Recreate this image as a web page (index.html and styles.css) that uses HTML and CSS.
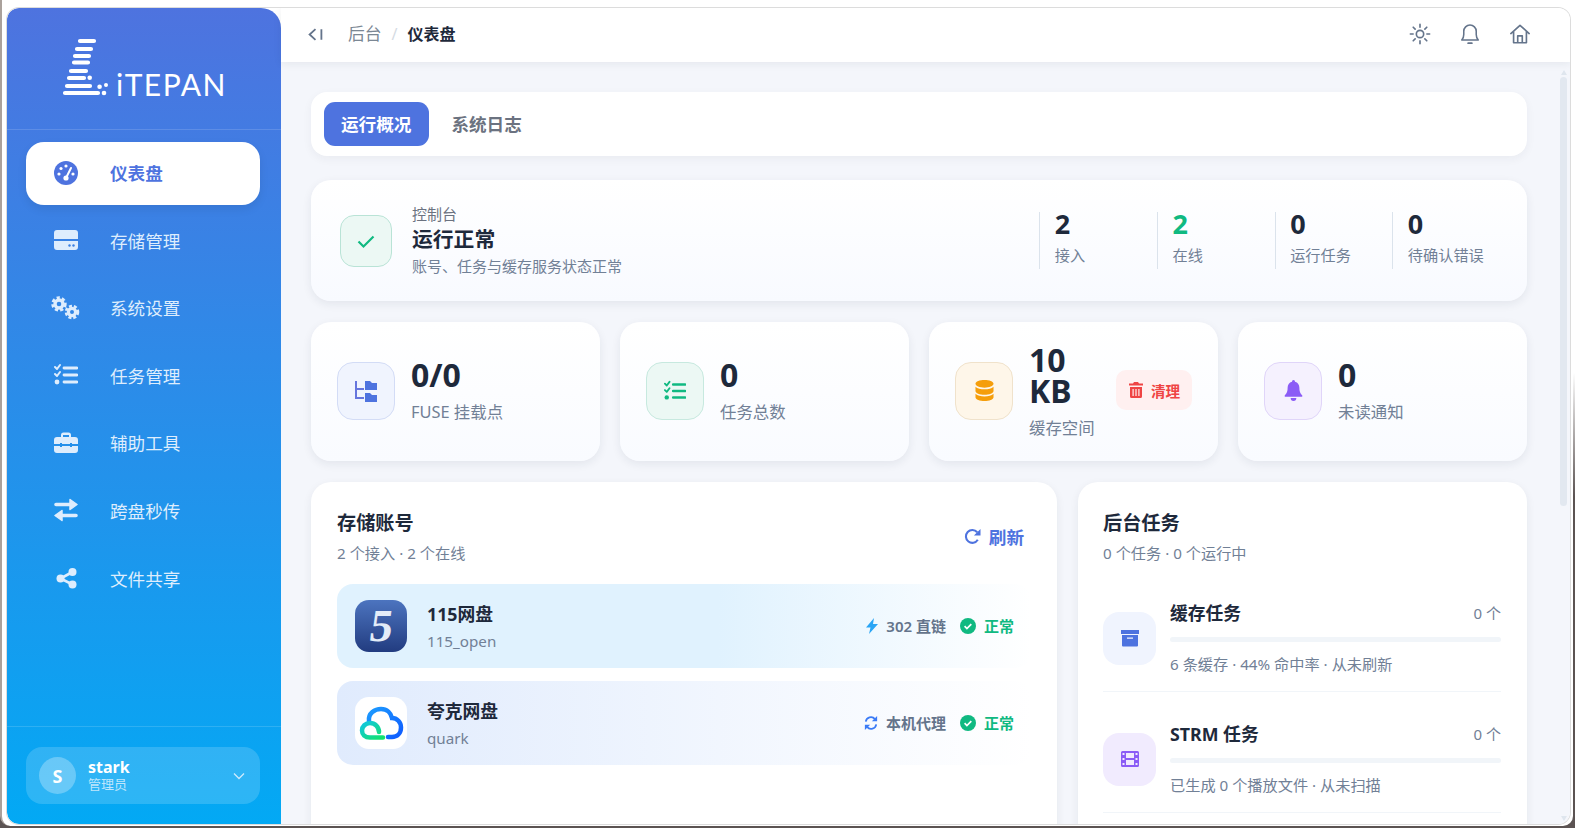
FILE: index.html
```html
<!DOCTYPE html>
<html lang="zh-CN">
<head>
    <meta charset="UTF-8">
    <title>LitePan 仪表盘</title>
    <link rel="stylesheet" href="styles.css">
</head>
<body>
<div class="frame">
<div class="window">

    <aside class="sidebar">
        <div class="brand">
            <svg class="brand-mark" viewBox="0 0 48 60" width="48" height="60">
                <g stroke="#fff" stroke-width="4.200" stroke-linecap="round">
                    <path d="M19 3h14M16 11h14M14 18h14M13 24.500h14M10 33h15M8 40h15M6 48h23M4 55h33"/>
                </g>
                <g fill="#fff">
                    <circle cx="28.700" cy="39.700" r="2.300"/>
                    <circle cx="38.600" cy="48.700" r="2.300"/>
                    <circle cx="45" cy="47" r="2"/>
                    <circle cx="43" cy="55" r="2.300"/>
                </g>
            </svg>
            <span class="brand-text">iTEPAN</span>
        </div>

        <nav class="nav">
            <a class="nav-item active">
                <svg class="nav-icon" viewBox="0 0 24 24"><circle cx="12" cy="12" r="12" fill="currentColor"/><g fill="#fff"><circle cx="5" cy="13" r="1.600"/><circle cx="7" cy="7.500" r="1.600"/><circle cx="12" cy="5" r="1.600"/><circle cx="19" cy="13" r="1.600"/></g><path d="M17 7l-4 8" stroke="#fff" stroke-width="2" stroke-linecap="round"/><circle cx="12" cy="17" r="2.600" fill="#fff"/></svg>
                <span>仪表盘</span>
            </a>
            <a class="nav-item">
                <svg class="nav-icon" viewBox="0 0 24 24"><path fill="currentColor" d="M3 2h18a3 3 0 0 1 3 3v6H0V5a3 3 0 0 1 3-3zM0 13h24v6a3 3 0 0 1-3 3H3a3 3 0 0 1-3-3z"/><circle cx="15.500" cy="17.500" r="1.200" fill="#3a80e2"/><circle cx="19.500" cy="17.500" r="1.200" fill="#3a80e2"/></svg>
                <span>存储管理</span>
            </a>
            <a class="nav-item">
                <svg class="nav-icon gears" viewBox="0 0 30 24"><g fill="none" stroke="currentColor"><circle cx="8" cy="8" r="4" stroke-width="3.400"/><circle cx="8" cy="8" r="6.400" stroke-width="2.600" stroke-dasharray="3.200 2.200"/><circle cx="21" cy="16" r="3.600" stroke-width="3.200"/><circle cx="21" cy="16" r="6" stroke-width="2.600" stroke-dasharray="3 1.900"/></g></svg>
                <span>系统设置</span>
            </a>
            <a class="nav-item">
                <svg class="nav-icon" viewBox="0 0 24 24"><path d="M1 4l2 2 3-4M1 11l2 2 3-4" fill="none" stroke="currentColor" stroke-width="2" stroke-linecap="round" stroke-linejoin="round"/><circle cx="3" cy="19" r="2.400" fill="currentColor"/><path d="M10 5h13M10 12h13M10 19h13" stroke="currentColor" stroke-width="2.800" stroke-linecap="round"/></svg>
                <span>任务管理</span>
            </a>
            <a class="nav-item">
                <svg class="nav-icon" viewBox="0 0 24 24"><path fill="currentColor" d="M7 6V4a2.500 2.500 0 0 1 2.500-2.500h5A2.500 2.500 0 0 1 17 4v2h-2V4h-6v2zM3 6h18a3 3 0 0 1 3 3v4h-6v-1h-2v1H8v-1H6v1H0V9a3 3 0 0 1 3-3zM0 15h6v1h2v-1h8v1h2v-1h6v4a3 3 0 0 1-3 3H3a3 3 0 0 1-3-3z"/></svg>
                <span>辅助工具</span>
            </a>
            <a class="nav-item">
                <svg class="nav-icon" viewBox="0 0 24 24"><path d="M2 6.500h14M22 17.500H8" stroke="currentColor" stroke-width="3.600" stroke-linecap="round"/><path d="M16 1.500L23 6.500 16 11.500zM8 12.500L1 17.500 8 22.500z" fill="currentColor" stroke="currentColor" stroke-width="1.500" stroke-linejoin="round"/></svg>
                <span>跨盘秒传</span>
            </a>
            <a class="nav-item">
                <svg class="nav-icon" viewBox="0 0 24 24"><path d="M18.500 6L6.500 12.500l12 6" fill="none" stroke="currentColor" stroke-width="2.600"/><circle cx="18.500" cy="6" r="4" fill="currentColor"/><circle cx="6.500" cy="12.500" r="4" fill="currentColor"/><circle cx="18.500" cy="18.500" r="4" fill="currentColor"/></svg>
                <span>文件共享</span>
            </a>
        </nav>

        <div class="side-foot">
            <div class="user-card">
                <div class="avatar">S</div>
                <div class="user-info">
                    <div class="user-name">stark</div>
                    <div class="user-role">管理员</div>
                </div>
                <svg class="user-arrow" viewBox="0 0 12 8" width="12" height="8"><path d="M1 1.500l5 5 5-5" fill="none" stroke="currentColor" stroke-width="1.300"/></svg>
            </div>
        </div>
    </aside>

    <div class="main">
        <header class="topbar">
            <svg class="collapse" viewBox="0 0 14 14" width="15" height="15"><path d="M7 2L1.500 7 7 12M12.500 2v10" fill="none" stroke="currentColor" stroke-width="1.700"/></svg>
            <div class="crumbs">
                <span class="crumb">后台</span>
                <span class="crumb-sep">/</span>
                <span class="crumb-now">仪表盘</span>
            </div>
            <div class="top-actions">
                <svg viewBox="0 0 24 24" width="22" height="22"><circle cx="12" cy="12" r="4" fill="none" stroke="currentColor" stroke-width="1.800"/><path d="M12 1.500v3M12 19.500v3M1.500 12h3M19.500 12h3M4.600 4.600l2.100 2.100M17.300 17.300l2.100 2.100M4.600 19.400l2.100-2.100M17.300 6.700l2.100-2.100" stroke="currentColor" stroke-width="1.800" stroke-linecap="round"/></svg>
                <svg viewBox="0 0 24 24" width="22" height="22"><path d="M3 18.500c1.500-1.500 2.200-3 2.200-6V9a6.800 6.800 0 0 1 13.600 0v3.500c0 3 .7 4.500 2.200 6z" fill="none" stroke="currentColor" stroke-width="1.700" stroke-linejoin="round"/><path d="M10 22h4" stroke="currentColor" stroke-width="2" stroke-linecap="round"/></svg>
                <svg viewBox="0 0 24 24" width="22" height="22"><path d="M2 11.500L12 2.500l10 9M5 9v12.500h14V9M9.500 21.500V14h5v7.500" fill="none" stroke="currentColor" stroke-width="1.800" stroke-linejoin="round" stroke-linecap="round"/></svg>
            </div>
        </header>

        <div class="main-body">
            <div class="content">
                <div class="tabs">
                    <div class="tab tab-on">运行概况</div>
                    <div class="tab">系统日志</div>
                </div>

                <section class="hero">
                    <div class="hero-icon">
                        <svg viewBox="0 0 20 20" width="20" height="20"><path d="M2.500 10.500l5 5 10-10" fill="none" stroke="#10b981" stroke-width="2.200"/></svg>
                    </div>
                    <div class="hero-text">
                        <div class="hero-kicker">控制台</div>
                        <div class="hero-title">运行正常</div>
                        <div class="hero-sub">账号、任务与缓存服务状态正常</div>
                    </div>
                    <div class="hero-stats">
                        <div class="hero-stat"><b>2</b><span>接入</span></div>
                        <div class="hero-stat"><b class="green">2</b><span>在线</span></div>
                        <div class="hero-stat"><b>0</b><span>运行任务</span></div>
                        <div class="hero-stat"><b>0</b><span>待确认错误</span></div>
                    </div>
                </section>

                <section class="stats">
                    <div class="stat-card">
                        <div class="stat-icon tone-blue">
                            <svg viewBox="0 0 24 24" width="24" height="24"><path d="M2 2v17h8M2 10h8" fill="none" stroke="#6675dd" stroke-width="2"/><path fill="#4e73df" d="M11 2h5l2 2h5v7H11zM11 14h5l2 2h5v7H11z"/></svg>
                        </div>
                        <div class="stat-text">
                            <div class="stat-value">0/0</div>
                            <div class="stat-label">FUSE 挂载点</div>
                        </div>
                    </div>
                    <div class="stat-card">
                        <div class="stat-icon tone-green">
                            <svg viewBox="0 0 24 24" width="22" height="22"><path d="M1 4l2 2 3-4M1 11l2 2 3-4" fill="none" stroke="#10b981" stroke-width="2" stroke-linecap="round" stroke-linejoin="round"/><circle cx="3" cy="19" r="2.400" fill="#10b981"/><path d="M10 5h13M10 12h13M10 19h13" stroke="#10b981" stroke-width="2.800" stroke-linecap="round"/></svg>
                        </div>
                        <div class="stat-text">
                            <div class="stat-value">0</div>
                            <div class="stat-label">任务总数</div>
                        </div>
                    </div>
                    <div class="stat-card">
                        <div class="stat-icon tone-amber">
                            <svg viewBox="0 0 20 24" width="19" height="23"><path fill="#f59e0b" d="M10 1c5 0 9.500 1.500 9.500 4S15 9 10 9 .5 7.500.5 5 5 1 10 1zM.5 8c2 2 5.500 2.800 9.500 2.800S17.500 10 19.500 8v4.500c0 2.500-4.500 4-9.500 4s-9.500-1.500-9.500-4zM.5 15.500c2 2 5.500 2.800 9.500 2.800s7.500-.8 9.500-2.800V19c0 2.500-4.500 4-9.500 4s-9.500-1.500-9.500-4z"/></svg>
                        </div>
                        <div class="stat-text">
                            <div class="stat-value">10 KB</div>
                            <div class="stat-label">缓存空间</div>
                        </div>
                        <button class="clear-btn">
                            <svg viewBox="0 0 14 16" width="14" height="16"><path fill="#ef4444" d="M5 0h4l1 1.500h4V3.500H0V1.500h4zM1 5h12v9.500a1.500 1.500 0 0 1-1.500 1.500h-9A1.500 1.500 0 0 1 1 14.500zM3.500 7v7h1.200V7zM6.400 7v7h1.200V7zM9.300 7v7h1.200V7z"/></svg>
                            <span>清理</span>
                        </button>
                    </div>
                    <div class="stat-card">
                        <div class="stat-icon tone-purple">
                            <svg viewBox="0 0 20 24" width="19" height="23"><path fill="#8b5cf6" d="M10 1a1.600 1.600 0 0 1 1.600 1.700c3 .7 4.600 3.200 4.600 6.300 0 5 1.500 6.500 3 8v1.500H.8V17c1.500-1.500 3-3 3-8 0-3.100 1.600-5.600 4.600-6.300A1.600 1.600 0 0 1 10 1zM7 20h6a3 3 0 0 1-6 0z"/></svg>
                        </div>
                        <div class="stat-text">
                            <div class="stat-value">0</div>
                            <div class="stat-label">未读通知</div>
                        </div>
                    </div>
                </section>

                <section class="panels">
                    <div class="panel">
                        <div class="panel-head">
                            <div>
                                <h2>存储账号</h2>
                                <p class="panel-sub">2 个接入 · 2 个在线</p>
                            </div>
                            <a class="refresh">
                                <svg viewBox="0 0 18 18" width="17" height="17"><path d="M14.600 12.500A6.800 6.800 0 1 1 14 4.500" fill="none" stroke="#4e73df" stroke-width="2.200"/><path fill="#4e73df" d="M17.500 1v7h-7z"/></svg>
                                <span>刷新</span>
                            </a>
                        </div>

                        <div class="account acc-sky">
                            <div class="acc-logo logo-115"><span>5</span></div>
                            <div class="acc-text">
                                <div class="acc-name">115网盘</div>
                                <div class="acc-id">115_open</div>
                            </div>
                            <div class="acc-mode">
                                <svg viewBox="0 0 12 16" width="12" height="16"><path fill="#2aa5f5" d="M8 0L0 9.500h4.500L3 16l9-10H7z"/></svg>
                                <span>302 直链</span>
                            </div>
                            <div class="acc-state">
                                <svg viewBox="0 0 16 16" width="16" height="16"><circle cx="8" cy="8" r="8" fill="#10b981"/><path d="M4.600 8.200l2.300 2.300 4.400-4.400" fill="none" stroke="#fff" stroke-width="1.700"/></svg>
                                <span>正常</span>
                            </div>
                        </div>

                        <div class="account acc-blue">
                            <div class="acc-logo logo-quark">
                                <svg viewBox="0 0 52 52" width="52" height="52">
                                    <defs>
                                        <linearGradient id="quarkBlue" x1="0" y1="0" x2="1" y2="1"><stop offset="0" stop-color="#1c9bff"/><stop offset="1" stop-color="#0f5cff"/></linearGradient>
                                        <linearGradient id="quarkGreen" x1="0" y1="0" x2="1" y2="1"><stop offset="0" stop-color="#12c6e0"/><stop offset="1" stop-color="#12e26c"/></linearGradient>
                                    </defs>
                                    <path d="M14 24C13 16 20 12 26 12c6 0 10 4 11 9 5 0 9 4 9 9.500 0 6-4 9.500-9 9.500h-4" fill="none" stroke="url(#quarkBlue)" stroke-width="4.500" stroke-linecap="round"/>
                                    <path d="M24 35c0-5-4-9-9-9-4.500 0-8 3.500-8 7.500S10 40.500 15 40.500h13" fill="none" stroke="url(#quarkGreen)" stroke-width="4.500" stroke-linecap="round"/>
                                </svg>
                            </div>
                            <div class="acc-text">
                                <div class="acc-name">夸克网盘</div>
                                <div class="acc-id">quark</div>
                            </div>
                            <div class="acc-mode">
                                <svg viewBox="0 0 16 16" width="14" height="14"><path d="M2 6.500A6 6 0 0 1 12.500 3.500M14 9.500A6 6 0 0 1 3.500 12.500" fill="none" stroke="#3b7bf6" stroke-width="2"/><path fill="#3b7bf6" d="M15 0v6h-6zM1 16v-6h6z"/></svg>
                                <span>本机代理</span>
                            </div>
                            <div class="acc-state">
                                <svg viewBox="0 0 16 16" width="16" height="16"><circle cx="8" cy="8" r="8" fill="#10b981"/><path d="M4.600 8.200l2.300 2.300 4.400-4.400" fill="none" stroke="#fff" stroke-width="1.700"/></svg>
                                <span>正常</span>
                            </div>
                        </div>
                    </div>

                    <div class="panel task-panel">
                        <div class="panel-head task-head">
                            <div>
                                <h2>后台任务</h2>
                                <p class="panel-sub">0 个任务 · 0 个运行中</p>
                            </div>
                        </div>

                        <div class="task">
                            <div class="task-icon tone-task-blue">
                                <svg viewBox="0 0 18 18" width="18" height="18"><path fill="#4e73df" d="M0 1h18v4H0zM1 6h16v10.500a1 1 0 0 1-1 1H2a1 1 0 0 1-1-1zM6 8.500v1.300h6V8.500z"/></svg>
                            </div>
                            <div class="task-body">
                                <div class="task-row"><span class="task-name">缓存任务</span><span class="task-count">0 个</span></div>
                                <div class="task-bar"></div>
                                <div class="task-desc">6 条缓存 · 44% 命中率 · 从未刷新</div>
                            </div>
                        </div>

                        <div class="task">
                            <div class="task-icon tone-task-purple">
                                <svg viewBox="0 0 18 16" width="18" height="16"><path fill="#8b5cf6" fill-rule="evenodd" d="M1.500 0h15A1.500 1.500 0 0 1 18 1.500v13a1.500 1.500 0 0 1-1.500 1.500h-15A1.500 1.500 0 0 1 0 14.500v-13A1.500 1.500 0 0 1 1.500 0zM1.500 2v2h2V2zM1.500 7v2h2V7zM1.500 12v2h2v-2zM14.500 2v2h2V2zM14.500 7v2h2V7zM14.500 12v2h2v-2zM5 2v5h8V2zM5 9v5h8V9z"/></svg>
                            </div>
                            <div class="task-body">
                                <div class="task-row"><span class="task-name">STRM 任务</span><span class="task-count">0 个</span></div>
                                <div class="task-bar"></div>
                                <div class="task-desc">已生成 0 个播放文件 · 从未扫描</div>
                            </div>
                        </div>
                    </div>
                </section>
            </div>

            <div class="scrollbar">
                <span class="scroll-up"></span>
                <span class="scroll-thumb"></span>
                <span class="scroll-down"></span>
            </div>
        </div>
    </div>

</div>
</div>
</body>
</html>
```

FILE: styles.css
```css
* {
    box-sizing: border-box;
}

html, body {
    margin: 0;
    height: 100%;
    overflow: hidden;
}

body {
    font-family: "Noto Sans", "Noto Sans CJK SC", sans-serif;
    background: linear-gradient(180deg, #fff 45%, #5b5352 60%);
    padding: 0 2px 2px 0;
    color: #1e293b;
}

.frame {
    height: 100%;
    background-color: #fff;
    padding: 8px 3px 2px 5px;
    border-left: 2px solid #aaa19c;
    border-radius: 0 0 10px 10px;
}

.window {
    display: flex;
    height: 100%;
    background: #fff;
    border-radius: 12px;
    overflow: hidden;
    box-shadow: 0 0 0 1px #dcdcdc;
}

/* sidebar */
.sidebar {
    width: 274px;
    flex-shrink: 0;
    display: flex;
    flex-direction: column;
    background: linear-gradient(180deg, #4e73df 0%, #03a9f4 100%);
    border-radius: 12px 20px 0 12px;
    color: #deedfd;
}

.brand {
    height: 122px;
    display: flex;
    align-items: flex-end;
    justify-content: center;
    gap: 7px;
    padding-bottom: 31px;
    border-bottom: 1px solid rgba(255, 255, 255, 0.14);
}

.brand-text {
    font-family: "Lato", sans-serif;
    font-weight: 400;
    font-size: 30px;
    line-height: 24px;
    letter-spacing: 1.5px;
    margin-bottom: 2px;
    color: #fff;
}

.nav {
    flex: 1;
    display: flex;
    flex-direction: column;
    gap: 4.6px;
    padding: 12px 21px 0 19px;
}

.nav-item {
    display: flex;
    align-items: center;
    gap: 32px;
    height: 63px;
    padding-left: 28px;
    border-radius: 18px;
    font-size: 17.6px;
    line-height: 24px;
}

.nav-item span {
    padding-bottom: 1px;
}

.nav-item.active {
    background: #fff;
    color: #4e73df;
    font-weight: 700;
    box-shadow: 0 4px 10px rgba(0, 0, 0, 0.08);
}

.nav-icon {
    width: 24px;
    height: 24px;
    flex-shrink: 0;
    margin-bottom: 2px;
}

.gears {
    width: 30px;
    margin-left: -3px;
    margin-right: -3px;
}

.side-foot {
    border-top: 1px solid rgba(255, 255, 255, 0.14);
    padding: 20px 21px 20px 19px;
}

.user-card {
    display: flex;
    align-items: center;
    height: 57px;
    padding: 0 15px 0 13px;
    border-radius: 16px;
    background: rgba(255, 255, 255, 0.16);
}

.avatar {
    width: 37px;
    height: 37px;
    border-radius: 50%;
    display: flex;
    align-items: center;
    justify-content: center;
    background: rgba(255, 255, 255, 0.28);
    color: #fff;
    font-weight: 700;
    font-size: 18px;
}

.user-info {
    flex: 1;
    margin-left: 12px;
}

.user-name {
    font-size: 16px;
    line-height: 18px;
    font-weight: 700;
    color: #fff;
}

.user-role {
    font-size: 13px;
    line-height: 17px;
    color: #bfe6fc;
}

.user-arrow {
    color: #cdeafc;
}

/* main area */
.main {
    flex: 1;
    min-width: 0;
    display: flex;
    flex-direction: column;
}

.topbar {
    height: 54px;
    flex-shrink: 0;
    display: flex;
    align-items: center;
    padding: 0 39px 2px 27px;
    background: #fff;
    box-shadow: 0 2px 8px rgba(30, 41, 59, 0.07);
    position: relative;
    z-index: 1;
}

.collapse {
    color: #64748b;
}

.crumbs {
    display: flex;
    align-items: center;
    margin-left: 25px;
    font-size: 16px;
    line-height: 24px;
}

.crumb {
    font-size: 16.8px;
    color: #7b8794;
}

.crumb-sep {
    margin: 0 10px;
    color: #d5dbe3;
}

.crumb-now {
    font-weight: 700;
    color: #1e293b;
}

.top-actions {
    margin-left: auto;
    display: flex;
    gap: 28px;
    color: #64748b;
}

.main-body {
    flex: 1;
    min-height: 0;
    display: flex;
    background-color: #f4f6fb;
}

.content {
    flex: 1;
    min-width: 0;
    overflow: hidden;
    padding: 30px 30px 0 30px;
}

.scrollbar {
    width: 13px;
    flex-shrink: 0;
    display: flex;
    flex-direction: column;
    align-items: center;
    padding: 8px 0 3px;
}

.scroll-up, .scroll-down {
    width: 0;
    height: 0;
    border-left: 3.5px solid transparent;
    border-right: 3.5px solid transparent;
}

.scroll-up {
    border-bottom: 5px solid #dfe6ee;
}

.scroll-down {
    margin-top: auto;
    border-top: 5px solid #dfe6ee;
}

.scroll-thumb {
    width: 7px;
    height: 429px;
    margin-top: 2px;
    border-radius: 4px;
    background: #e2e8f0;
}

/* tabs */
.tabs {
    display: flex;
    gap: 5px;
    height: 64px;
    padding: 10px 13px;
    margin-bottom: 24px;
    background: #fff;
    border-radius: 16px;
    box-shadow: 0 3px 10px rgba(30, 41, 59, 0.05);
}

.tab {
    display: flex;
    align-items: center;
    padding: 0 18px 2px 17px;
    border-radius: 11px;
    font-size: 17.6px;
    font-weight: 700;
    color: #6b7280;
}

.tab-on {
    background: #4e73df;
    color: #fff;
}

/* health card */
.hero {
    display: flex;
    align-items: center;
    height: 121px;
    padding: 0 17px 0 29px;
    margin-bottom: 21px;
    border-radius: 20px;
    background: linear-gradient(180deg, #fff, #f8faff);
    box-shadow: 0 3px 10px rgba(30, 41, 59, 0.08);
}

.hero-icon {
    width: 52px;
    height: 52px;
    flex-shrink: 0;
    display: flex;
    align-items: center;
    justify-content: center;
    border: 1px solid #b9e3d6;
    border-radius: 14px;
    background: #ecf8f4;
}

.hero-text {
    margin-left: 20px;
    padding-top: 2px;
}

.hero-kicker {
    font-size: 15px;
    line-height: 19px;
    color: #6b7280;
}

.hero-title {
    font-size: 20.8px;
    line-height: 30px;
    font-weight: 700;
}

.hero-sub {
    font-size: 15px;
    line-height: 24px;
    color: #718096;
}

.hero-stats {
    margin-left: auto;
    display: flex;
}

.hero-stat {
    width: 117.7px;
    height: 57px;
    padding-left: 14.5px;
    border-left: 1px solid #dbe3ec;
    display: flex;
    flex-direction: column;
}

.hero-stat b {
    font-size: 27px;
    line-height: 24px;
    color: #1e293b;
}

.hero-stat span {
    margin-top: 9px;
    font-size: 15.2px;
    line-height: 20px;
    color: #718096;
}

.hero-stat b.green {
    color: #10b981;
}

/* stat cards */
.stats {
    display: grid;
    grid-template-columns: repeat(4, 1fr);
    gap: 20px;
    margin-bottom: 21px;
}

.stat-card {
    display: flex;
    align-items: center;
    gap: 16px;
    height: 139px;
    padding: 0 26px;
    border-radius: 20px;
    background: linear-gradient(180deg, #fff, #f9fbff);
    box-shadow: 0 3px 10px rgba(30, 41, 59, 0.08);
}

.stat-icon {
    width: 58px;
    height: 58px;
    flex-shrink: 0;
    margin-bottom: 2px;
    display: flex;
    align-items: center;
    justify-content: center;
    border: 1px solid;
    border-radius: 16px;
}

.tone-blue {
    background: #f0f4fe;
    border-color: #d3dcf6;
}

.tone-green {
    background: #ecf8f4;
    border-color: #c7e9df;
}

.tone-amber {
    background: #fef6e9;
    border-color: #f0e2cb;
}

.tone-purple {
    background: #f5f1fe;
    border-color: #e0d5f9;
}

.stat-text {
    flex: 1;
    min-width: 0;
}

.stat-value {
    font-size: 32px;
    line-height: 31px;
    font-weight: 700;
    color: #1e293b;
}

.stat-label {
    margin-top: 10px;
    font-size: 16.4px;
    line-height: 24px;
    color: #718096;
}

.clear-btn {
    flex-shrink: 0;
    display: flex;
    align-items: center;
    gap: 8px;
    width: 76px;
    height: 40px;
    margin-bottom: 3px;
    padding: 0 0 0 13px;
    border: none;
    border-radius: 10px;
    background: #fff0f0;
    font-family: inherit;
    font-size: 14.6px;
    font-weight: 700;
    color: #ef4444;
}

/* bottom panels */
.panels {
    display: grid;
    grid-template-columns: 1fr 449px;
    gap: 21px;
}

.panel {
    padding: 28px 26px;
    border-radius: 20px;
    background: #fff;
    box-shadow: 0 3px 10px rgba(30, 41, 59, 0.07);
}

.task-panel {
    padding-left: 25px;
}

.panel-head {
    display: flex;
    align-items: center;
    justify-content: space-between;
    margin-bottom: 21px;
}

.task-head {
    margin-bottom: 22px;
}

.panel h2 {
    margin: 0;
    font-size: 19.2px;
    line-height: 26px;
    font-weight: 700;
}

.panel-sub {
    margin: 7px 0 0;
    font-size: 15.2px;
    line-height: 20px;
    color: #718096;
}

.refresh {
    display: flex;
    align-items: center;
    gap: 8px;
    margin-right: 7px;
    font-size: 17.6px;
    line-height: 24px;
    font-weight: 700;
    color: #4e73df;
}

.account {
    display: flex;
    align-items: center;
    height: 84px;
    padding: 0 17px 0 18px;
    margin-bottom: 13px;
    border-radius: 16px;
}

.acc-sky {
    background: linear-gradient(90deg, #e0f2fe 0%, #e0f2fe 55%, #fff 100%);
}

.acc-blue {
    background: linear-gradient(90deg, #e0ebfd 0%, #fff 100%);
}

.acc-logo {
    width: 52px;
    height: 52px;
    flex-shrink: 0;
    border-radius: 14px;
    overflow: hidden;
}

.logo-115 {
    display: flex;
    align-items: center;
    justify-content: center;
    background: linear-gradient(180deg, #4c74bf, #223c80);
}

.logo-115 span {
    font-family: "Liberation Serif", serif;
    font-weight: 700;
    font-size: 46px;
    line-height: 46px;
    color: #e3ecf8;
    transform: skewX(-8deg);
}

.logo-quark {
    background: #fff;
}

.acc-text {
    flex: 1;
    margin-left: 20px;
    padding-top: 2px;
}

.acc-name {
    font-size: 17.8px;
    line-height: 24px;
    font-weight: 700;
}

.acc-id {
    margin-top: 4px;
    font-size: 15.2px;
    line-height: 22px;
    color: #718096;
}

.acc-mode, .acc-state {
    display: flex;
    align-items: center;
    font-size: 15px;
    line-height: 20px;
    font-weight: 600;
}

.acc-mode {
    gap: 8px;
    color: #64748b;
}

.acc-state {
    gap: 8px;
    margin-left: 14px;
    color: #10b981;
}

.task {
    display: flex;
    align-items: center;
    gap: 14px;
    padding: 17px 0;
    margin-bottom: 14px;
    border-bottom: 1px solid #f1f5f9;
}

.task-icon {
    width: 53px;
    height: 53px;
    flex-shrink: 0;
    display: flex;
    align-items: center;
    justify-content: center;
    border-radius: 16px;
}

.tone-task-blue {
    background: #f0f4fe;
}

.tone-task-purple {
    background: #f1ebfe;
}

.task-body {
    flex: 1;
    min-width: 0;
}

.task-row {
    display: flex;
    justify-content: space-between;
    align-items: center;
    height: 24px;
    padding-bottom: 4px;
}

.task-name {
    font-size: 17.8px;
    font-weight: 700;
}

.task-count {
    font-size: 15px;
    color: #718096;
}

.task-bar {
    height: 5px;
    margin-top: 11px;
    border-radius: 3px;
    background: #f1f5f9;
}

.task-desc {
    margin-top: 12px;
    font-size: 15.2px;
    line-height: 20px;
    color: #718096;
}
```
